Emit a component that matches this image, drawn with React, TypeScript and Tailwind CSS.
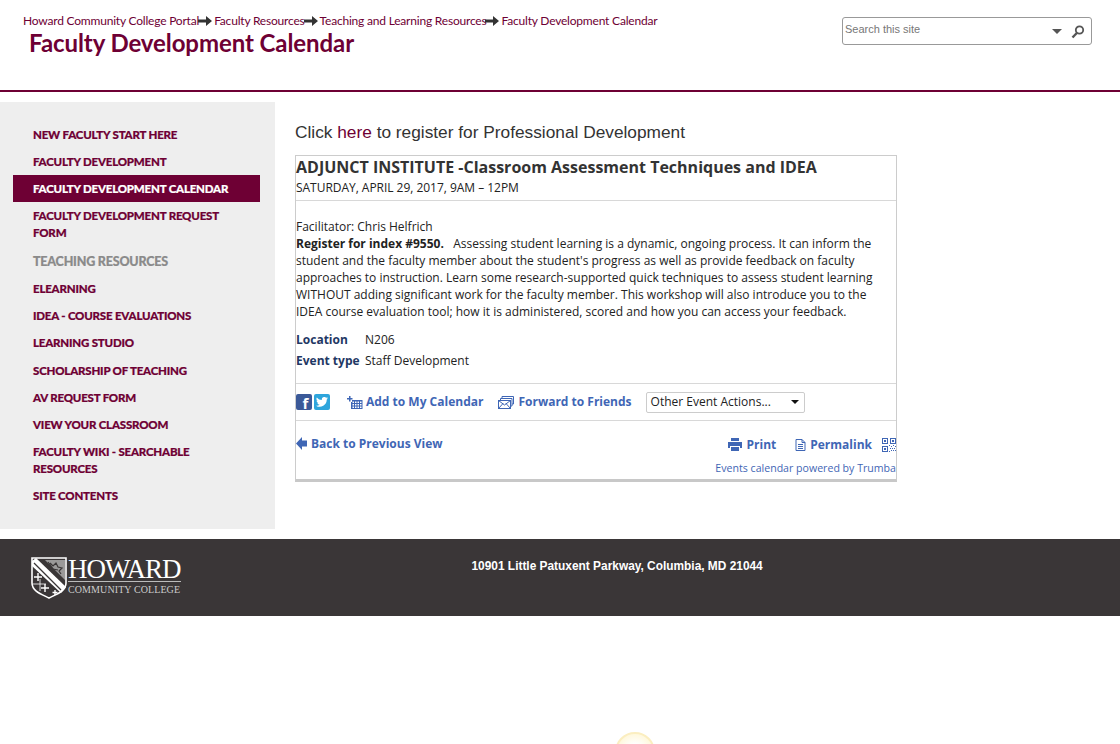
import React from 'react';

const crumbs = ['Howard Community College Portal', 'Faculty Resources', 'Teaching and Learning Resources', 'Faculty Development Calendar'];

const navItems = [
  { label: 'NEW FACULTY START HERE', className: 'mt-[24px]' },
  { label: 'FACULTY DEVELOPMENT', className: 'mt-[10px]' },
  { label: 'FACULTY DEVELOPMENT CALENDAR', active: true, className: 'mt-[5px]' },
  { label: 'FACULTY DEVELOPMENT REQUEST FORM', className: 'mt-[5px]' },
  { label: 'TEACHING RESOURCES', heading: true, className: 'mt-[12px]' },
  { label: 'ELEARNING', className: 'mt-[10px]' },
  { label: 'IDEA - COURSE EVALUATIONS', className: 'mt-[10px]' },
  { label: 'LEARNING STUDIO', className: 'mt-[10px]' },
  { label: 'SCHOLARSHIP OF TEACHING', className: 'mt-[11px]' },
  { label: 'AV REQUEST FORM', className: 'mt-[10px]' },
  { label: 'VIEW YOUR CLASSROOM', className: 'mt-[10px]' },
  { label: 'FACULTY WIKI - SEARCHABLE RESOURCES', className: 'mt-[10px]' },
  { label: 'SITE CONTENTS', className: 'mt-[10px]' },
];

const Arrow: React.FC = () => (
  <svg width="14" height="10" viewBox="0 0 14 10" className="-ml-[1px] mr-[1px] shrink-0">
    <path d="M0 3.500h8V0l6 5-6 5V6.500H0z" fill="#333" />
  </svg>
);

const SearchGlyph: React.FC = () => (
  <svg width="14" height="14" viewBox="0 0 14 14" className="mr-[6px] mt-[3px] shrink-0" fill="none" stroke="#555">
    <circle cx="8.500" cy="5" r="3.700" strokeWidth="1.800" />
    <path d="M5.800 8L1.500 12.500" strokeWidth="2.400" />
  </svg>
);

const Shield: React.FC = () => (
  <svg width="36" height="42" viewBox="0 0 36 42" className="shrink-0">
    <path d="M1 1h34v25c0 8-9 11-17 15C10 37 1 34 1 26z" fill="#3a3637" stroke="#fff" strokeWidth="1.600" />
    <path d="M1 4l4-3 30 29-5 6L1 9z" fill="#fff" />
    <path d="M3 6l27 27" stroke="#3a3637" strokeWidth="1.200" />
    <path d="M14 3h20v20z" fill="#bbb" opacity="0.75" />
    <path d="M19 6l3 3 3-3 2 4 4 1-3 3 2 3M17 5l5 7 5 1" stroke="#3a3637" strokeWidth="1.200" fill="none" />
    <path d="M7 16v8M3 20h8M14 27v8M10 31h8M24 33v5M21.500 35.500h5" stroke="#fff" strokeWidth="1.400" />
    <path d="M2 27h13M9 22v12" stroke="#fff" strokeWidth="0.800" />
  </svg>
);

const CalendarAdd: React.FC = () => (
  <svg width="16" height="13" viewBox="0 0 16 13" className="shrink-0" fill="#3f66b5">
    <path d="M2 0h1.500v2H5.500v1.500H3.500v2H2v-2H0V2h2z" />
    <path d="M5 4h10.500v9H4V6h1zM5.500 5.500v1.500H7V5.500zM8 5.500v1.500h1.500V5.500zM10.500 5.500v1.500H12V5.500zM13 5.500v1.500h1.500V5.500zM5.500 8v1.500H7V8zM8 8v1.500h1.500V8zM10.500 8v1.500H12V8zM13 8v1.500h1.500V8zM5.500 10.500V12H7v-1.500zM8 10.500V12h1.500v-1.500zM10.500 10.500V12H12v-1.500zM13 10.500V12h1.500v-1.500z" fillRule="evenodd" />
  </svg>
);

const Envelopes: React.FC = () => (
  <svg width="16" height="13" viewBox="0 0 16 13" className="shrink-0" fill="none" stroke="#3f66b5" strokeWidth="1">
    <path d="M4 2.500V.5h11.500v7.500H14" />
    <path d="M2.500 4V2.500H14V10h-1" />
    <rect x="0.500" y="4.500" width="12" height="8" fill="#fff" />
    <path d="M.5 4.500l6 4.500 6-4.500M.5 12.500l4.500-5M12.500 12.500l-4.500-5" />
  </svg>
);

const PrintIcon: React.FC = () => (
  <svg width="14" height="13" viewBox="0 0 14 13" className="shrink-0" fill="#3f66b5">
    <path d="M3 0h8v3H3zM0 4h14v6h-2V8H2v2H0zM3 9h8v4H3z" />
  </svg>
);

const PageIcon: React.FC = () => (
  <svg width="11" height="12" viewBox="0 0 11 12" className="shrink-0" fill="none" stroke="#3f66b5" strokeWidth="1">
    <path d="M1 .5h6l3 3v8H1zM7 .5v3h3M3 5.500h5M3 7.500h5M3 9.500h5" />
  </svg>
);

const QrIcon: React.FC = () => (
  <svg width="14" height="14" viewBox="0 0 14 14" className="shrink-0" fill="#3f66b5">
    <path fillRule="evenodd" d="M0 0h6v6H0zM1 1v4h4V1zM8 0h6v6H8zM9 1v4h4V1zM0 8h6v6H0zM1 9v4h4V9z" />
    <path d="M2 2h2v2H2zM10 2h2v2h-2zM2 10h2v2H2zM7 7h1v1H7zM9 8h1v1H9zM11 7h1v1h-1zM13 8h1v1h-1zM8 10h1v1H8zM10 10h1v1h-1zM12 10h1v1h-1zM9 12h1v1H9zM11 12h1v1h-1zM13 12h1v1h-1zM7 13h1v1H7z" />
  </svg>
);

const App: React.FC = () => {
  return (
    <div className="relative h-[744px] w-[1120px] overflow-hidden bg-white font-['Liberation_Sans',sans-serif]">
      <header className="flex h-[92px] justify-between border-b-2 border-[#6e0034]">
        <div className="pl-[23px] pt-[13px]">
          <nav className="flex h-[16px] items-center font-['Lato',sans-serif] text-[12px] tracking-[-0.2px] text-[#6e0034]">
            {crumbs.map((crumb, i) => (
              <React.Fragment key={crumb}>
                {i > 0 && <Arrow />}
                <span className={i > 0 ? 'ml-[1px]' : ''}>{crumb}</span>
              </React.Fragment>
            ))}
          </nav>
          <h1 className="ml-[6px] font-['Lato',sans-serif] text-[24px] font-bold leading-[28px] tracking-[-0.08px] text-[#6e0034]">
            Faculty Development Calendar
          </h1>
        </div>
        <div className="mr-[28px] mt-[17px] flex h-[28px] w-[250px] items-start rounded-[3px] border border-[#999] pl-[2px] pt-[4px]">
          <span className="flex-1 text-[11px] leading-[14px] text-[#777]">Search this site</span>
          <span className="mr-[9px] mt-[7px] h-0 w-0 border-x-[5px] border-t-[5px] border-x-transparent border-t-[#555]" />
          <SearchGlyph />
        </div>
      </header>

      <div className="mt-[10px] flex items-start">
        <aside className="h-[427px] w-[275px] shrink-0 bg-[#eeeeee] pl-[13px] pr-[15px]">
          <ul className="font-['Lato',sans-serif] text-[11.500px] font-black leading-[17px] tracking-[-0.2px] [-webkit-text-stroke:0.2px]">
            {navItems.map((item) => (
              <li
                key={item.label}
                className={`${item.className} px-[20px] ${
                  item.active
                    ? 'bg-[#6e0034] py-[5px] text-white'
                    : item.heading
                      ? 'text-[12.500px] text-[#8a8a8a]'
                      : 'text-[#6e0034]'
                }`}
              >
                {item.label}
              </li>
            ))}
          </ul>
        </aside>

        <main className="ml-[20px] w-[602px]">
          <p className="mt-[20px] text-[17.300px] leading-[20px] text-[#333]">
            Click <span className="text-[#6e0034]">here</span> to register for Professional Development
          </p>
          <section className="mt-[13px] border border-b-[3px] border-[#cccccc] border-b-[#c8c8c8] font-['Open_Sans',sans-serif] text-[12px] text-[#222]">
            <div className="h-[45px] border-b border-[#d8d8d8]">
              <h2 className="h-[24px] text-[16px] font-bold leading-[22px] text-[#333]">
                ADJUNCT INSTITUTE -Classroom Assessment Techniques and IDEA
              </h2>
              <p className="leading-[16px] tracking-[-0.03px]">SATURDAY, APRIL 29, 2017, 9AM – 12PM</p>
            </div>
            <div className="pt-[17px] leading-[17px]">
              <p>Facilitator: Chris Helfrich</p>
              <p className="w-[590px]">
                <strong>Register for index #9550.</strong>&nbsp;&nbsp; Assessing student learning is a dynamic, ongoing process. It can inform the student and the faculty member about the student's progress as well as provide feedback on faculty approaches to instruction. Learn some research-supported quick techniques to assess student learning WITHOUT adding significant work for the faculty member. This workshop will also introduce you to the IDEA course evaluation tool; how it is administered, scored and how you can access your feedback.
              </p>
              <dl className="mt-[11px]">
                <div className="flex h-[21px]">
                  <dt className="w-[69px] font-bold text-[#1f3864]">Location</dt>
                  <dd>N206</dd>
                </div>
                <div className="flex h-[21px]">
                  <dt className="w-[69px] font-bold text-[#1f3864]">Event type</dt>
                  <dd>Staff Development</dd>
                </div>
              </dl>
            </div>
            <div className="mt-[10px] flex h-[38px] items-center border-y border-[#d8d8d8] font-bold text-[#3f66b5]">
              <span className="flex h-[16px] w-[16px] items-center justify-center rounded-[2px] bg-[#3b5998] pl-[3px] pt-[2px] text-[15px] leading-none text-white">f</span>
              <span className="ml-[2px] flex h-[16px] w-[16px] items-center justify-center rounded-[2px] bg-[#2ea5dc]">
                <svg width="12" height="10" viewBox="0 0 24 20" fill="#fff">
                  <path d="M24 2.400a9.800 9.800 0 0 1-2.800.8 4.900 4.900 0 0 0 2.100-2.700 9.800 9.800 0 0 1-3.100 1.200 4.900 4.900 0 0 0-8.400 4.500A14 14 0 0 1 1.700.9a4.900 4.900 0 0 0 1.500 6.600 4.900 4.900 0 0 1-2.200-.6c0 2.400 1.700 4.400 3.900 4.900a4.900 4.900 0 0 1-2.200.1 4.900 4.900 0 0 0 4.600 3.400A9.900 9.900 0 0 1 0 17.300 14 14 0 0 0 21.500 4.900 10 10 0 0 0 24 2.400z" />
                </svg>
              </span>
              <span className="ml-[17px]"><CalendarAdd /></span>
              <span className="ml-[3px]">Add to My Calendar</span>
              <span className="ml-[15px]"><Envelopes /></span>
              <span className="ml-[4px]">Forward to Friends</span>
              <div className="ml-[14px] flex h-[21px] w-[159px] items-center justify-between rounded-[2px] border border-[#ccc] pl-[4px] pr-[5px] font-normal text-[#222]">
                <span>Other Event Actions...</span>
                <span className="h-0 w-0 border-x-[4px] border-t-[4px] border-x-transparent border-t-[#111]" />
              </div>
            </div>
            <div className="flex h-[58px] flex-col font-bold text-[#3f66b5]">
              <div className="flex items-start justify-between">
                <div className="mt-[14px] flex items-center leading-[17px]">
                  <svg width="12" height="13" viewBox="0 0 12 13" fill="#3f66b5" className="shrink-0">
                    <path d="M0 6.500L6 0v3.500h5v6H6V13z" />
                  </svg>
                  <span className="ml-[3px]">Back to Previous View</span>
                </div>
                <div className="mt-[15px] flex items-center leading-[17px]">
                  <PrintIcon />
                  <span className="ml-[4px]">Print</span>
                  <span className="ml-[19px]"><PageIcon /></span>
                  <span className="ml-[4px]">Permalink</span>
                  <span className="ml-[10px]"><QrIcon /></span>
                </div>
              </div>
              <p className="mt-[8px] text-right text-[10.600px] font-normal leading-[14px]">Events calendar powered by Trumba</p>
            </div>
          </section>
        </main>
      </div>

      <footer className="mt-[10px] flex h-[77px] bg-[#3a3637]">
        <div className="ml-[31px] mt-[18px] flex w-[152px] items-start text-white">
          <Shield />
          <div className="ml-[1px] font-['Liberation_Serif',serif] leading-none">
            <div className="h-[24px] text-[27px] leading-[24px] tracking-[-1px]">HOWARD</div>
            <div className="border-t border-[#bbb] pt-[2px] text-[10px] leading-[12px] tracking-[0.1px] text-[#ccc]">COMMUNITY COLLEGE</div>
          </div>
        </div>
        <p className="ml-[288.500px] mt-[20px] whitespace-nowrap text-[11.900px] font-bold leading-[14px] text-white">
          10901 Little Patuxent Parkway, Columbia, MD 21044
        </p>
      </footer>

      <div className="absolute left-[615px] top-[732px] h-[40px] w-[40px] rounded-full border-2 border-[#fbeec0] bg-[radial-gradient(circle,#ffffff_30%,#fff3c4_100%)]" />
    </div>
  );
};

export default App;
